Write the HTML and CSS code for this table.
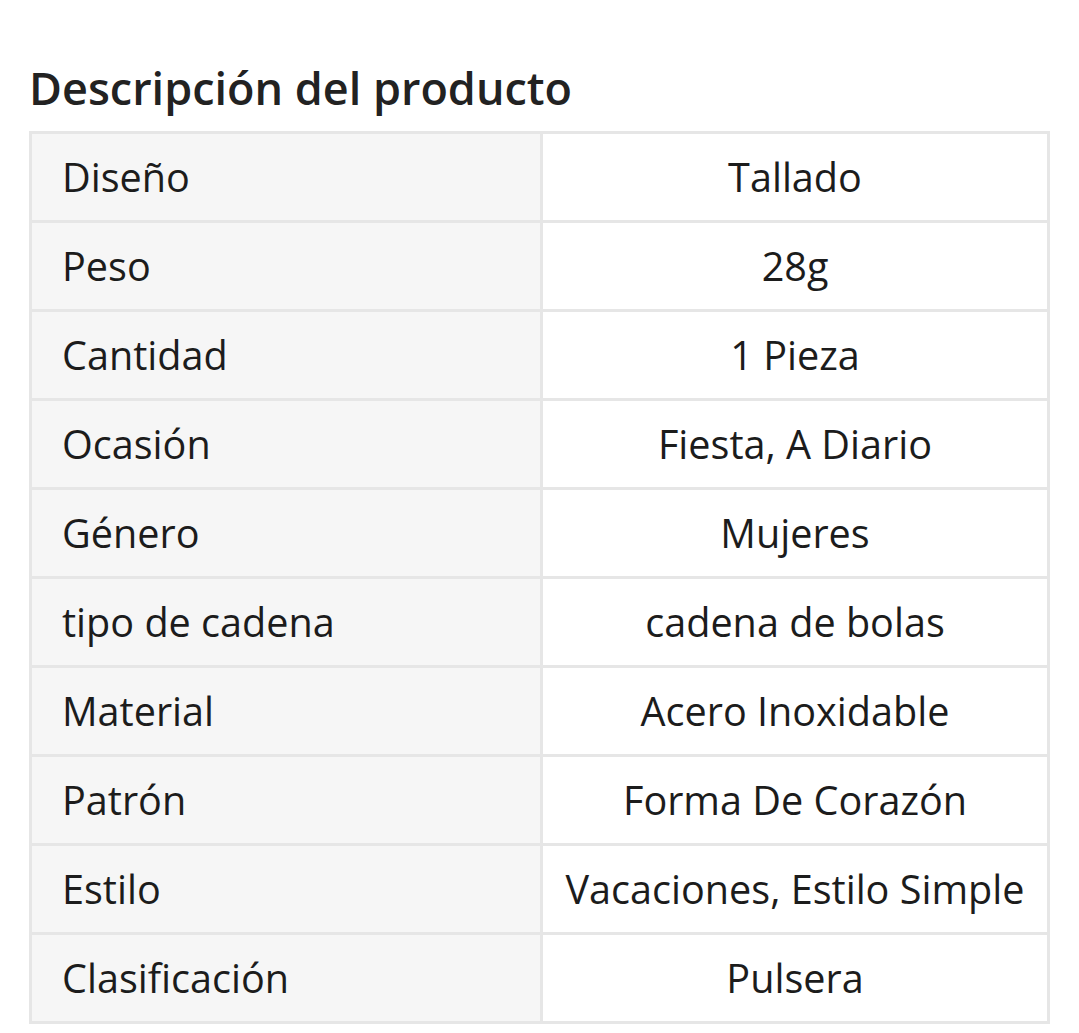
FILE: index.html
```html
<!DOCTYPE html>
<html lang="es">
<head>
<meta charset="utf-8">
<link rel="stylesheet" href="styles.css">
</head>
<body>
<div class="wrap">
  <h2 class="title">Descripción del producto</h2>
  <table class="specs">
    <tr><td class="k">Diseño</td><td class="v">Tallado</td></tr>
    <tr><td class="k">Peso</td><td class="v">28g</td></tr>
    <tr><td class="k">Cantidad</td><td class="v">1 Pieza</td></tr>
    <tr><td class="k">Ocasión</td><td class="v">Fiesta, A Diario</td></tr>
    <tr><td class="k">Género</td><td class="v">Mujeres</td></tr>
    <tr><td class="k">tipo de cadena</td><td class="v">cadena de bolas</td></tr>
    <tr><td class="k">Material</td><td class="v">Acero Inoxidable</td></tr>
    <tr><td class="k">Patrón</td><td class="v">Forma De Corazón</td></tr>
    <tr><td class="k">Estilo</td><td class="v">Vacaciones, Estilo Simple</td></tr>
    <tr><td class="k">Clasificación</td><td class="v">Pulsera</td></tr>
  </table>
</div>
</body>
</html>
```
FILE: styles.css
```css
html, body { margin: 0; padding: 0; background: #fff; }
body { font-family: "Open Sans", "Noto Sans", sans-serif; color: #222; }
.wrap { padding: 58px 29px 0 29px; }
.title { margin: 0 0 14px 0; font-size: 45px; font-weight: 600; line-height: 59px; color: #222; }
.specs { width: 1021px; border-collapse: collapse; border: 3px solid #e6e6e6; table-layout: fixed; }
.specs td { border: 3px solid #e6e6e6; height: 89px; padding: 0; font-size: 39.6px; line-height: 52px; color: #1c1c1c; box-sizing: border-box; }
.specs td.k { width: 511px; background: #f6f6f6; padding-left: 30px; text-align: left; }
.specs td.v { background: #fff; text-align: center; }
```
